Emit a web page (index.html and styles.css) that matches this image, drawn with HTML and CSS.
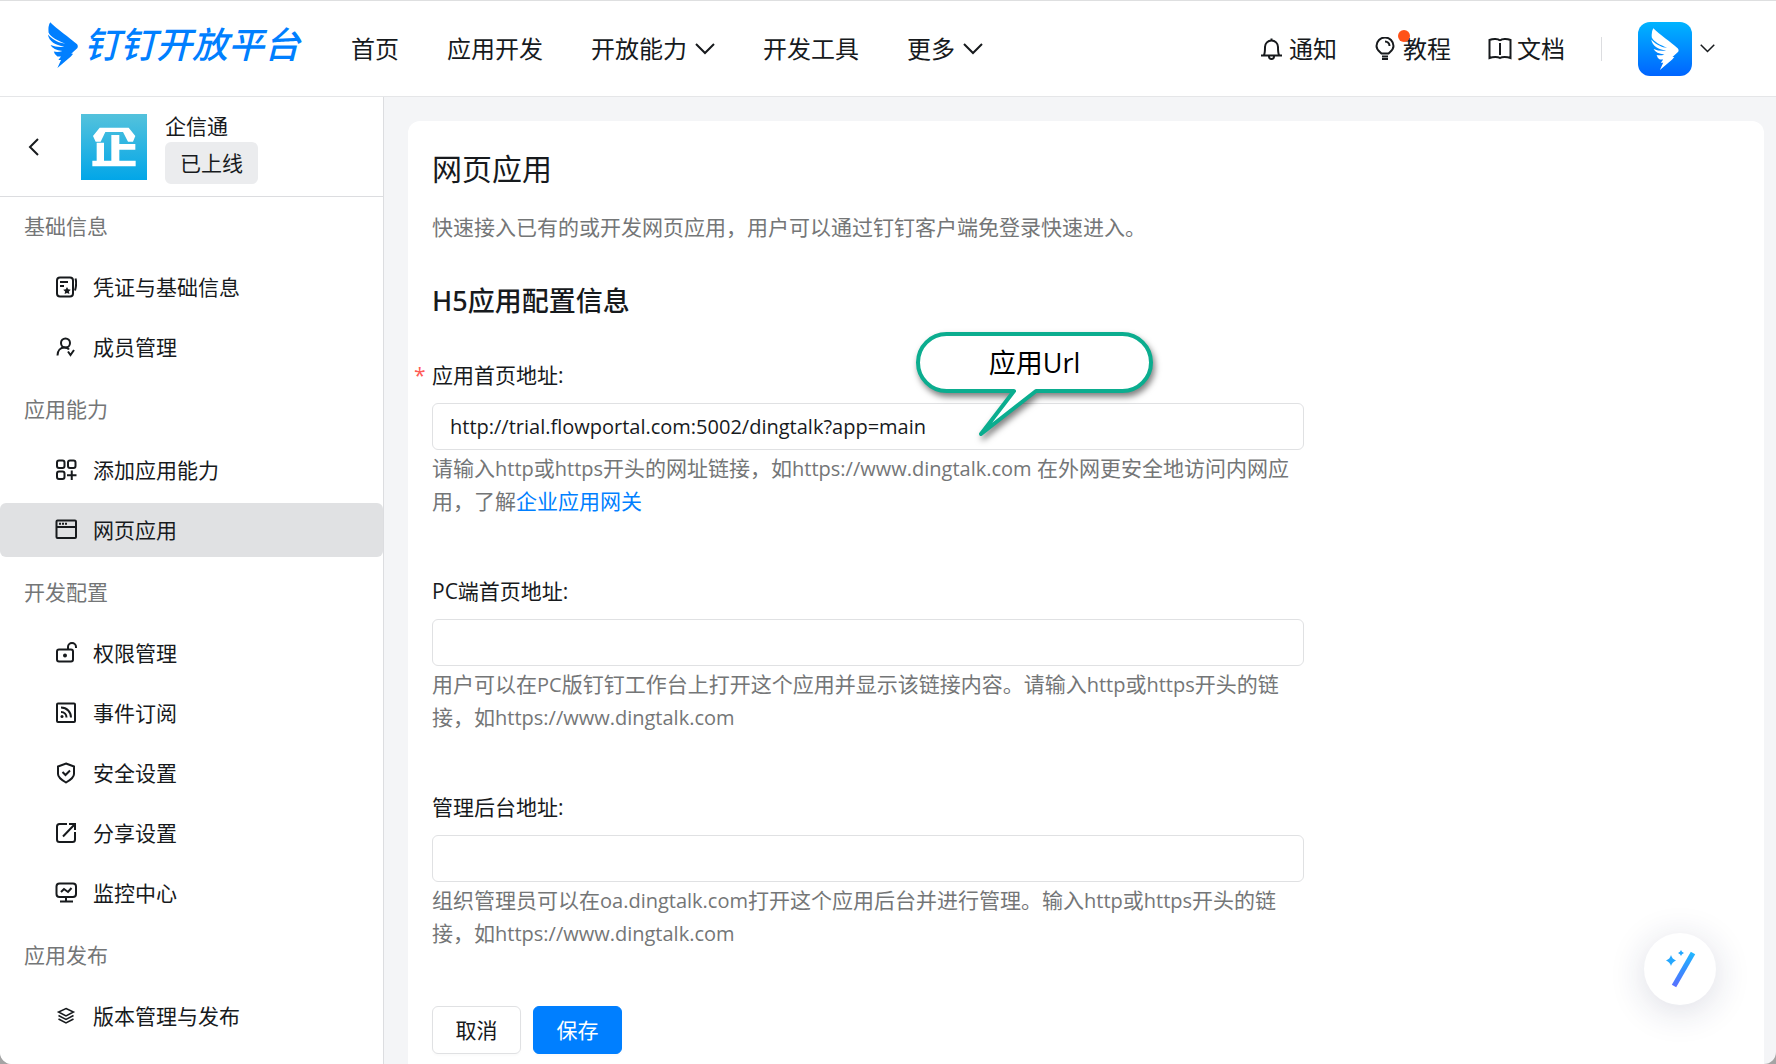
FILE: index.html
```html
<!DOCTYPE html>
<html lang="zh-CN">
<head>
<meta charset="utf-8">
<meta name="viewport" content="width=device-width, initial-scale=1">
<title>网页应用 - 钉钉开放平台</title>
<link rel="stylesheet" href="styles.css">
</head>
<body>
<svg class="defs" width="0" height="0" aria-hidden="true">
  <symbol id="wing" viewBox="0 0 92 140">
    <path d="M7 1C26 20 66 48 89 68Q93 73 90 79L71 97L77 97L70 105L29 140L40 116L32 116L40 105L29 105Q20 100 18 90Q32 93 44 88Q16 86 8 70Q30 79 50 75C22 70 4 60 0 38C18 57 36 64 53 66C30 57 8 46 2 32Q0 12 7 1Z"/>
  </symbol>
  <symbol id="chevron" viewBox="0 0 20 12">
    <path d="M1 1l9 9 9-9" fill="none" stroke="currentColor" stroke-width="2"/>
  </symbol>
</svg>
<div class="app">
  <header class="topbar">
    <a class="brand" href="#"><svg class="brand-mark"><use href="#wing"/></svg><span class="brand-name">钉钉开放平台</span></a>
    <nav class="topnav">
      <a href="#">首页</a>
      <a href="#">应用开发</a>
      <a href="#">开放能力<svg class="chevron"><use href="#chevron"/></svg></a>
      <a href="#">开发工具</a>
      <a href="#">更多<svg class="chevron"><use href="#chevron"/></svg></a>
    </nav>
    <div class="tools">
      <nav class="tool-links">
        <a href="#"><svg class="tool-icon" viewBox="0 0 24 24"><path d="M1 18.500h21M4 18c1-2 1-4 1-8a6.500 6.500 0 0 1 13 0c0 4 0 6 1 8M9 19.500a2.500 2.500 0 0 0 5 0M11.500 1.500v2"/></svg>通知</a>
        <a href="#"><svg class="tool-icon" viewBox="0 0 24 24"><path d="M7.500 16.500C5.500 14.500 2.500 13 2.500 9a8 8 0 0 1 17 0c0 4-3 5.500-5 7.500zM11 4.500a4.500 4.500 0 0 1 4.500 4.500M8 19.500h6M8 22h6"/></svg><i class="dot"></i>教程</a>
        <a href="#"><svg class="tool-icon" viewBox="0 0 24 24"><path d="M12 3.500C10 1.500 5 1.500 1.500 3v18c3.500-1.500 8.500-1.500 10.500 0 2-1.500 7-1.500 10.500 0V3C19 1.500 14 1.500 12 3.500M12 6v12"/></svg>文档</a>
      </nav>
      <span class="divider"></span>
      <button class="account" type="button" aria-label="账户"><span class="avatar"><svg class="avatar-mark"><use href="#wing"/></svg></span><svg class="chevron-small"><use href="#chevron"/></svg></button>
    </div>
  </header>
  <div class="body">
    <aside class="sidebar">
      <div class="app-head">
        <button class="back" type="button" aria-label="返回"><svg viewBox="0 0 12 18" width="12" height="18"><path d="M10 1L2 9l8 8" fill="none" stroke="currentColor" stroke-width="2"/></svg></button>
        <svg class="app-icon" viewBox="243 342 198 198">
          <defs><linearGradient id="sky" x1="0" y1="0" x2="0" y2="1"><stop offset="0" stop-color="#54c2dc"/><stop offset="1" stop-color="#02a6e8"/></linearGradient></defs>
          <path fill="url(#sky)" d="M243 342h198v198H243z"/>
          <path fill="#fff" d="M299 383h87l20 25-7 17h-15l-15-29h-53l-14 29h-15l-8-17zM290 428h22v54h22v-77h24v27h48v17h-48v33h49v17H277v-17h13z"/>
        </svg>
        <div class="app-meta"><span>企信通</span><span class="tag">已上线</span></div>
      </div>
      <nav class="menu">
        <section>
          <h2>基础信息</h2>
          <a href="#"><svg viewBox="0 0 22 22"><rect x="2" y="1.500" width="16" height="19" rx="3"/><path d="M5 6h8M5 10h4M20.500 2.500q1.500 5-.5 12"/><path class="fill" d="M12 11l1.200 2.300 2.600.4-1.900 1.800.5 2.600-2.400-1.200-2.400 1.200.5-2.600-1.900-1.800 2.600-.4z"/></svg>凭证与基础信息</a>
          <a href="#"><svg viewBox="0 0 22 22"><circle cx="10.500" cy="7" r="4.500"/><path d="M2.500 19.500c0-5 3-8 7-8 2 0 3.500.5 4.500 2M13 15.500l2.500 3.500 3.500-5"/></svg>成员管理</a>
        </section>
        <section>
          <h2>应用能力</h2>
          <a href="#"><svg viewBox="0 0 22 22"><rect x="2" y="1.500" width="7.500" height="7.500" rx="2"/><rect x="13" y="1.500" width="7.500" height="7.500" rx="2"/><rect x="2" y="12.500" width="7.500" height="7.500" rx="2"/><path d="M16.750 11.500v9.500M12 16.250h9.500"/></svg>添加应用能力</a>
          <a href="#" class="active"><svg viewBox="0 0 22 22"><rect x="1.500" y="1.500" width="19.500" height="17.500" rx="1"/><path d="M2 8h19"/><path stroke-dasharray="2 1" d="M4 4.800h8"/></svg>网页应用</a>
        </section>
        <section>
          <h2>开发配置</h2>
          <a href="#"><svg viewBox="0 0 22 22"><rect x="2" y="7.500" width="16" height="12" rx="2"/><path d="M13 7V5a4 4 0 0 1 8 0v1"/><circle class="fill" cx="10" cy="13.500" r="2"/></svg>权限管理</a>
          <a href="#"><svg viewBox="0 0 22 22"><rect x="2" y="1.500" width="18" height="18.500" rx="1"/><path d="M6 5.500c6 0 10 4.500 10 10M6 10c3.500 0 5.500 2.500 5.500 5.500"/><circle class="fill" cx="7" cy="14.500" r="1.500"/></svg>事件订阅</a>
          <a href="#"><svg viewBox="0 0 22 22"><path d="M11 1.500l8 3v7.500q0 4-8 8.500-8-4.500-8-8.500V4.500zM7.500 10l3 3 4.500-4.500"/></svg>安全设置</a>
          <a href="#"><svg viewBox="0 0 22 22"><path d="M12 2H4.500Q2 2 2 4.500v13Q2 20 4.500 20h13q2.500 0 2.500-2.500V10M14 2h6v6M20 2L8 14.500"/></svg>分享设置</a>
          <a href="#"><svg viewBox="0 0 22 22"><rect x="1.500" y="1.500" width="19.500" height="13.500" rx="3"/><path d="M6 10l3-3 4 3 3.500-4M11 15v4.500M5 19.500h13"/></svg>监控中心</a>
        </section>
        <section>
          <h2>应用发布</h2>
          <a href="#"><svg class="thin" viewBox="0 0 22 22"><path d="M11 3.500l7.500 3.500-7.500 4-7.500-4zM3.500 10.500l7.500 4 7.500-4M3.500 14l7.500 4 7.500-4"/></svg>版本管理与发布</a>
        </section>
      </nav>
    </aside>
    <main class="main">
      <form class="card">
        <h1>网页应用</h1>
        <p class="lead">快速接入已有的或开发网页应用，用户可以通过钉钉客户端免登录快速进入。</p>
        <h2>H5应用配置信息</h2>
        <div class="fields">
          <div class="field required">
            <label for="home-url">应用首页地址:</label>
            <input id="home-url" type="text" value="http://trial.flowportal.com:5002/dingtalk?app=main">
            <p class="help">请输入<span lang="en">http</span>或<span lang="en">https</span>开头的网址链接，如<span lang="en">https://www.dingtalk.com</span> 在外网更安全地访问内网应用，了解<a href="#">企业应用网关</a></p>
            <div class="callout">
              <svg viewBox="0 0 237 106" width="237" height="106"><path d="M30.500 2H206.500a28.500 28.500 0 0 1 0 57H120L65 102L98 59H30.500a28.500 28.500 0 0 1 0-57Z" fill="#fff" stroke="#0bad8f" stroke-width="4" stroke-linejoin="round"/></svg>
              <span>应用Url</span>
            </div>
          </div>
          <div class="field">
            <label for="pc-url">PC端首页地址:</label>
            <input id="pc-url" type="text">
            <p class="help">用户可以在<span lang="en">PC</span>版钉钉工作台上打开这个应用并显示该链接内容。请输入<span lang="en">http</span>或<span lang="en">https</span>开头的链接，如<span lang="en">https://www.dingtalk.com</span></p>
          </div>
          <div class="field">
            <label for="admin-url">管理后台地址:</label>
            <input id="admin-url" type="text">
            <p class="help">组织管理员可以在<span lang="en">oa.dingtalk.com</span>打开这个应用后台并进行管理。输入<span lang="en">http</span>或<span lang="en">https</span>开头的链接，如<span lang="en">https://www.dingtalk.com</span></p>
          </div>
        </div>
        <div class="actions">
          <button type="button" class="btn">取消</button>
          <button type="button" class="btn primary">保存</button>
        </div>
      </form>
    </main>
  </div>
</div>
<button class="assistant" type="button" aria-label="智能助手">
  <svg viewBox="0 0 36 40" width="36" height="40">
    <defs><linearGradient id="wand" gradientUnits="userSpaceOnUse" x1="0" y1="0" x2="0" y2="40"><stop offset="0" stop-color="#1fc0ff"/><stop offset=".5" stop-color="#3392ff"/><stop offset="1" stop-color="#5f6bff"/></linearGradient></defs>
    <path d="M31 4L12 37" stroke="url(#wand)" stroke-width="5" fill="none"/>
    <path fill="#25a8ff" d="M9 6q1 4 5 5.500Q10 13 9 17q-1-4-5-5.500Q8 10 9 6zM19 1q.5 2 3 3-2.500 1-3 3-.5-2-3-3 2.500-1 3-3z"/>
  </svg>
</button>
</body>
</html>
```
FILE: styles.css
```css
* { box-sizing: border-box; }
html { background: #a4a4a4; }
body {
  margin: 0;
  color: #171a1d;
  font: 21px/32px "Open Sans", "Noto Sans CJK SC", sans-serif;
}
h1, h2, p { margin: 0; font-weight: 400; }
a { color: inherit; text-decoration: none; }
button { border: 0; padding: 0; background: none; color: inherit; font: inherit; cursor: pointer; }
.defs { position: absolute; }

.app {
  display: flex;
  flex-direction: column;
  min-height: 100vh;
  overflow: hidden;
  border-top: 1px solid #dedfe0;
  border-radius: 0 0 12px 12px;
  background: #f4f5f7;
}

/* top bar */
.topbar {
  display: flex;
  align-items: center;
  height: 96px;
  padding: 0 61px 0 47px;
  border-bottom: 1px solid #e5e6e8;
  background: #fff;
  font-size: 24px;
}
.brand { display: flex; align-items: center; gap: 5px; color: #007fff; padding-bottom: 8px; }
.brand-mark { width: 32px; height: 46px; fill: currentColor; }
.brand-name { font-size: 36px; line-height: 46px; font-weight: 500; font-style: italic; }
.topnav { display: flex; gap: 48px; margin-left: 51px; }
.topnav a { display: flex; align-items: center; gap: 8px; white-space: nowrap; }
.chevron { width: 20px; height: 12px; }
.tools { display: flex; align-items: center; gap: 36px; margin-left: auto; }
.tool-links { display: flex; gap: 37px; }
.tool-links a { position: relative; display: flex; align-items: center; gap: 5px; white-space: nowrap; }
.tool-icon { width: 24px; height: 24px; fill: none; stroke: currentColor; stroke-width: 2; }
.dot { position: absolute; left: 24px; top: -3px; width: 12px; height: 12px; border-radius: 50%; background: #ff5219; }
.divider { width: 1px; height: 24px; background: #dcdde0; }
.account { display: flex; align-items: center; gap: 8px; }
.avatar {
  display: flex;
  align-items: center;
  justify-content: center;
  width: 54px;
  height: 54px;
  border-radius: 12px;
  background: linear-gradient(#00b4ff, #0064ff);
}
.avatar-mark { width: 28px; height: 42px; fill: #fff; }
.chevron-small { width: 15px; height: 9px; }

/* side bar */
.body { display: flex; flex: 1; }
.sidebar { flex: 0 0 384px; border-right: 1px solid #dcdde0; background: #fff; }
.app-head {
  display: flex;
  align-items: center;
  height: 100px;
  padding-left: 28px;
  border-bottom: 1px solid #dcdde0;
}
.back { display: flex; width: 53px; }
.app-icon { width: 66px; height: 66px; margin-right: 18px; }
.app-meta { display: flex; flex-direction: column; align-items: flex-start; }
.tag { padding: 5px 15px; border-radius: 6px; background: #ebecee; }
.menu { display: flex; flex-direction: column; gap: 3px; }
.menu section { display: flex; flex-direction: column; }
.menu h2 { padding-left: 24px; margin-bottom: 2px; color: #747677; font-size: 21px; line-height: 58px; }
.menu a {
  display: flex;
  align-items: center;
  gap: 16px;
  height: 54px;
  margin: 3px 0;
  padding-left: 55px;
  border-radius: 6px;
}
.menu .active { background: #e0e1e3; }
.menu svg { width: 22px; height: 22px; fill: none; stroke: currentColor; stroke-width: 2; }
.menu .thin { stroke-width: 1.5; }
.menu .fill { fill: currentColor; stroke: none; }

/* content */
.main { display: flex; flex: 1; padding: 24px 12px 0 24px; }
.card { flex: 1; padding: 27px 24px 8px; border-radius: 12px 12px 0 0; background: #fff; }
.card h1 { font-size: 30px; line-height: 42px; }
.lead { margin-top: 21px; color: #747677; }
.card h2 { margin: 38px 0; font-family: "Noto Sans", "Noto Sans CJK SC", sans-serif; font-size: 27px; line-height: 40px; font-weight: 500; }
.fields { display: flex; flex-direction: column; gap: 57px; }
.field { position: relative; width: calc(100% * 2 / 3); }
.field label { display: block; }
.required label::before { content: "*"; position: absolute; left: -18px; color: #ff5b56; }
.field input {
  display: block;
  width: 100%;
  height: 47px;
  margin: 12px 0 2px;
  padding: 0 17px;
  border: 1px solid #e0e1e3;
  border-radius: 6px;
  background: #fff;
  color: inherit;
  font: inherit;
  font-size: 20px;
}
.help { color: #747677; line-height: 33px; }
.help [lang="en"] { font-size: 20px; line-height: 1; }
.help a { color: #007fff; }
.callout { position: absolute; left: 484px; top: -27px; width: 237px; height: 106px; color: #000; }
.callout svg { display: block; filter: drop-shadow(2px 4px 3px rgba(0, 0, 0, .5)); }
.callout span { position: absolute; inset: 0 0 45px; line-height: 61px; font-size: 27px; text-align: center; }
.actions { display: flex; gap: 12px; margin-top: 56px; }
.btn {
  width: 89px;
  height: 48px;
  border: 1px solid #e0e1e3;
  border-radius: 6px;
  background: #fff;
  box-shadow: 0 2px 2px rgba(0, 0, 0, .02);
}
.primary { border-color: #007fff; background: #007fff; color: #fff; }

.assistant {
  position: fixed;
  right: 60px;
  bottom: 59px;
  display: flex;
  align-items: center;
  justify-content: center;
  width: 72px;
  height: 72px;
  border-radius: 50%;
  background: #fff;
  box-shadow: 0 6px 36px rgba(30, 40, 90, .16);
}
```
